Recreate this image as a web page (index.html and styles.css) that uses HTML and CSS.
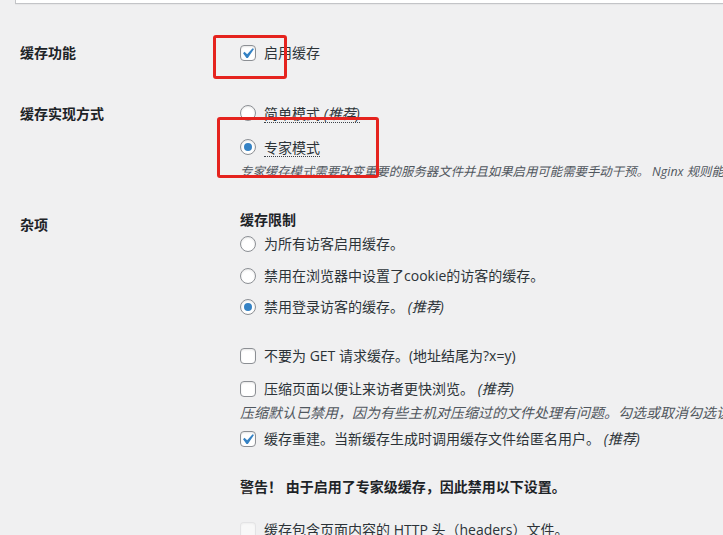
FILE: index.html
```html
<!DOCTYPE html>
<html lang="zh-CN">
<head>
<meta charset="utf-8">
<title>缓存设置</title>
<link rel="stylesheet" href="styles.css">
</head>
<body>
<div class="page">
  <div class="notice"></div>

  <div class="row row-a">
    <div class="th">缓存功能</div>
    <div class="td">
      <div class="line">
        <span class="cb checked"><svg viewBox="0 0 20 20" width="21" height="21"><path d="M14.83 4.89l1.34.94-5.81 8.38H9.02L5.78 9.67l1.34-1.25 2.57 2.4z" fill="#3582c4"/></svg></span>
        <span>启用缓存</span>
      </div>
    </div>
  </div>

  <div class="row row-b">
    <div class="th">缓存实现方式</div>
    <div class="td">
      <div class="line">
        <span class="rb"></span>
        <span class="abbr">简单模式 <em>(推荐)</em></span>
      </div>
      <div class="line mode-gap">
        <span class="rb checked"></span>
        <span class="abbr">专家模式</span>
      </div>
      <div class="line desc small">专家缓存模式需要改变重要的服务器文件并且如果启用可能需要手动干预。 Nginx 规则能在这里找到。</div>
    </div>
  </div>

  <div class="row row-c">
    <div class="th">杂项</div>
    <div class="td">
      <div class="line strong">缓存限制</div>
      <div class="line first-opt">
        <span class="rb"></span>
        <span>为所有访客启用缓存。</span>
      </div>
      <div class="line opt">
        <span class="rb"></span>
        <span>禁用在浏览器中设置了cookie的访客的缓存。</span>
      </div>
      <div class="line opt">
        <span class="rb checked"></span>
        <span>禁用登录访客的缓存。 <em>(推荐)</em></span>
      </div>
      <div class="line group-gap">
        <span class="cb"></span>
        <span>不要为 GET 请求缓存。(地址结尾为?x=y)</span>
      </div>
      <div class="line opt-wide">
        <span class="cb"></span>
        <span>压缩页面以便让来访者更快浏览。 <em>(推荐)</em></span>
      </div>
      <div class="line desc after-opt">压缩默认已禁用，因为有些主机对压缩过的文件处理有问题。勾选或取消勾选该选项会删除缓存。</div>
      <div class="line after-desc">
        <span class="cb checked"><svg viewBox="0 0 20 20" width="21" height="21"><path d="M14.83 4.89l1.34.94-5.81 8.38H9.02L5.78 9.67l1.34-1.25 2.57 2.4z" fill="#3582c4"/></svg></span>
        <span>缓存重建。当新缓存生成时调用缓存文件给匿名用户。 <em>(推荐)</em></span>
      </div>
      <div class="line strong group-gap-2">警告！ 由于启用了专家级缓存，因此禁用以下设置。</div>
      <div class="line disabled-gap">
        <span class="cb disabled"></span>
        <span>缓存包含页面内容的 HTTP 头（headers）文件。</span>
      </div>
    </div>
  </div>

  <div class="mark mark-1"></div>
  <div class="mark mark-2"></div>
</div>
</body>
</html>
```

FILE: styles.css
```css
html, body {
  margin: 0;
  padding: 0;
  overflow: hidden;
}

body {
  background: #f0f0f1;
  font-family: "Open Sans", "Noto Sans CJK SC", sans-serif;
  font-size: 14px;
  color: #2c3338;
}

.page {
  position: relative;
  width: 723px;
  height: 535px;
  overflow: hidden;
}

.notice {
  margin-left: 15px;
  height: 3px;
  background: #fff;
  border-left: 1px solid #c3c4c7;
  border-bottom: 1px solid #c3c4c7;
  box-shadow: 0 1px 1px rgba(0, 0, 0, 0.04);
}

.row {
  display: grid;
  grid-template-columns: 240px 1fr;
}

.th {
  padding-left: 20px;
  font-weight: 700;
  color: #1d2327;
  line-height: 20px;
  height: 20px;
}

.row-a { padding-bottom: 25px; }
.row-a .th, .row-a .td { padding-top: 39px; }

.row-b { padding-bottom: 13px; }
.row-b .th { padding-top: 16px; }
.row-b .td { padding-top: 15px; }

.row-c .th { padding-top: 20px; }
.row-c .td { padding-top: 15px; }

.td {
  min-width: 0;
}

.line {
  display: flex;
  align-items: center;
  gap: 8px;
  height: 20px;
  line-height: 20px;
  white-space: nowrap;
}

.mode-gap { margin-top: 14px; }
.row-b .desc { margin-top: 5px; }

.first-opt { margin-top: 4px; }
.opt { margin-top: 11.5px; }
.group-gap { margin-top: 28.5px; }
.opt-wide { margin-top: 13.5px; }
.after-opt { margin-top: 4px; }
.after-desc { margin-top: 6px; }
.group-gap-2 { margin-top: 28px; }
.disabled-gap { margin-top: 23px; }

em {
  font-style: italic;
}

.desc {
  font-style: italic;
  color: #50575e;
}

.desc.small {
  font-size: 12.4px;
}

.strong {
  font-weight: 700;
  color: #1d2327;
}

.abbr {
  border-bottom: 1px dotted #3c434a;
  line-height: 17px;
  margin-top: 2px;
}

.cb, .rb {
  flex: none;
  width: 14px;
  height: 14px;
  border: 1px solid #8c8f94;
  background: #fff;
  box-shadow: inset 0 1px 2px rgba(0, 0, 0, 0.1);
}

.cb {
  border-radius: 4px;
}

.cb svg {
  display: block;
  margin: -3px 0 0 -4px;
}

.cb.disabled {
  border-color: rgba(220, 220, 222, 0.75);
  background: rgba(255, 255, 255, 0.5);
  box-shadow: inset 0 1px 2px rgba(0, 0, 0, 0.04);
}

.rb {
  border-radius: 50%;
  display: flex;
  align-items: center;
  justify-content: center;
}

.rb.checked::before {
  content: "";
  width: 8px;
  height: 8px;
  border-radius: 50%;
  background: #3582c4;
}

.mark {
  position: absolute;
  box-sizing: border-box;
  border: 3px solid #e5231e;
  border-radius: 3px;
}

.mark-1 {
  left: 213px;
  top: 35px;
  width: 74px;
  height: 44px;
}

.mark-2 {
  left: 217px;
  top: 117px;
  width: 162px;
  height: 61px;
}
```
